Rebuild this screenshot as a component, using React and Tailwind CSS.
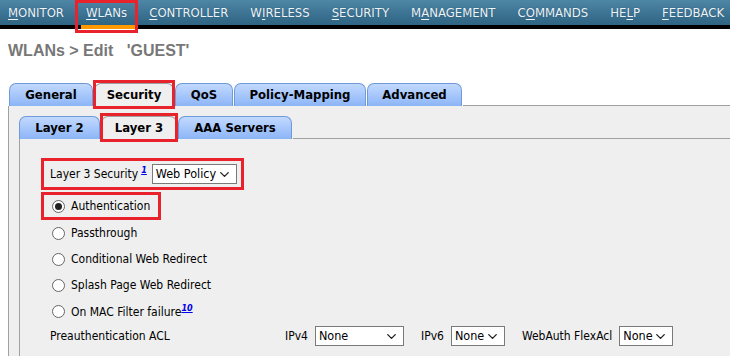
import { ChevronDown } from 'lucide-react'

const nav = [
  ['M', 'ONITOR'],
  ['W', 'LANs'],
  ['C', 'ONTROLLER'],
  ['W', 'I', 'RELESS'],
  ['S', 'ECURITY'],
  ['M', 'A', 'NAGEMENT'],
  ['C', 'O', 'MMANDS'],
  ['HE', 'L', 'P'],
  ['F', 'EEDBACK'],
]

// which chunk of each nav label carries the access-key underline
const underlineIdx = [0, 0, 0, 1, 0, 1, 1, 1, 0]

const font = "font-['DejaVu_Sans_Condensed','DejaVu_Sans',sans-serif]"

function NavItem({ parts, u, active }) {
  return (
    <div className="relative h-full flex items-center px-[11px] whitespace-nowrap">
      <span className="text-[13px] text-[#eef5fa] [text-shadow:0_0_1px_#1d4560]">
        {parts.map((p, i) => (
          <span key={i} className={i === u ? 'underline underline-offset-2' : ''}>{p}</span>
        ))}
      </span>
      {active && (
        <>
          <div className="absolute left-[6px] right-[2px] top-[25px] h-[4px] bg-[#ff9900]" />
          <div className="absolute left-0 right-0 top-0 h-[33px] border-[3px] border-[#e8232b]" />
        </>
      )}
    </div>
  )
}

function Tab({ label, selected, w, boxed }) {
  return (
    <div className="relative">
      <div
        className={`h-[23px] ${w} rounded-t-[7px] border border-b-0 flex items-center justify-center text-[13px] font-bold text-black ${
          selected
            ? 'bg-[#efefef] border-[#a0a0a0]'
            : 'bg-gradient-to-b from-[#c2d9ff] to-[#8cb5f6] border-[#6f9ad8]'
        }`}
      >
        {label}
      </div>
      {boxed && <div className="absolute -left-[1px] -right-[1px] -top-[3px] -bottom-[3px] border-[3px] border-[#e8232b]" />}
    </div>
  )
}

function Select({ value, w }) {
  return (
    <div className={`h-[20px] ${w} bg-white border border-[#7a7a7a] flex items-center justify-between pl-[3px] pr-[4px] text-[12.5px] text-black`}>
      <span>{value}</span>
      <ChevronDown size={15} strokeWidth={2.2} className="text-[#222]" />
    </div>
  )
}

function Radio({ checked }) {
  return (
    <div className="w-[13px] h-[13px] rounded-full border border-[#666] bg-white flex items-center justify-center">
      {checked && <div className="w-[7px] h-[7px] rounded-full bg-[#222]" />}
    </div>
  )
}

function Sup({ n, gap }) {
  return <sup className={`text-[9px] font-bold italic text-[#0000ee] underline -top-[5px] ${gap ? 'ml-[3px]' : ''}`}>{n}</sup>
}

export default function App() {
  return (
    <div className={`w-[730px] h-[356px] bg-white overflow-hidden ${font}`}>
      {/* top nav */}
      <div className="h-[25px] flex bg-gradient-to-b from-[#4e86a5] to-[#2f6483] -ml-[3px]">
        {nav.map((n, i) => (
          <NavItem key={i} parts={n} u={underlineIdx[i]} active={i === 1} />
        ))}
      </div>
      <div className="h-[4px] bg-black" />

      {/* title */}
      <div className="pl-[8px] pt-[10px] h-[54px] font-['Liberation_Sans',sans-serif] font-bold text-[16px] text-[#777] whitespace-pre">
        WLANs &gt; Edit   'GUEST'
      </div>

      {/* level 1 tabs */}
      <div className="pl-[9px] flex gap-[1px] items-end">
        <Tab label="General" w="w-[84px]" />
        <Tab label="Security" w="w-[80px]" selected boxed />
        <Tab label="QoS" w="w-[58px]" />
        <Tab label="Policy-Mapping" w="w-[132px]" />
        <Tab label="Advanced" w="w-[95px]" />
        <div className="flex-1 border-b border-[#a0a0a0]" />
      </div>

      <div className="ml-[8px] border-l border-[#a0a0a0] bg-[#efefef] h-[260px] pt-[10px]">
        {/* level 2 tabs */}
        <div className="pl-[10px] flex gap-[1px] items-end">
          <Tab label="Layer 2" w="w-[81px]" />
          <Tab label="Layer 3" w="w-[76px]" selected boxed />
          <Tab label="AAA Servers" w="w-[114px]" />
          <div className="flex-1 border-b border-[#a0a0a0]" />
        </div>

        <div className="ml-[10px] border-l border-[#a0a0a0] h-[230px] pt-[19px] pl-[21px] text-[12px] text-black">
          <div className="inline-flex items-center h-[32px] border-[3px] border-[#e8232b] pl-[6px] pr-[4px]">
            <span>Layer 3 Security<Sup n="1" gap /></span>
            <div className="ml-[5px]">
              <Select value="Web Policy" w="w-[85px]" />
            </div>
          </div>

          <div>
            <div className="inline-flex items-center h-[28px] border-[3px] border-[#e8232b] pl-[8px] pr-[8px] mt-[2px] gap-[6px]">
              <Radio checked />
              <span>Authentication</span>
            </div>
          </div>

          {['Passthrough', 'Conditional Web Redirect', 'Splash Page Web Redirect'].map(t => (
            <div key={t} className="flex items-center h-[26px] pl-[11px] gap-[6px]">
              <Radio />
              <span>{t}</span>
            </div>
          ))}
          <div className="flex items-center h-[27px] pl-[11px] gap-[6px]">
            <Radio />
            <span>On MAC Filter failure<Sup n="10" /></span>
          </div>

          <div className="flex items-center h-[22px] pl-[9px]">
            <span className="w-[235px]">Preauthentication ACL</span>
            <span className="mr-[7px]">IPv4</span>
            <Select value="None" w="w-[89px]" />
            <span className="ml-[17px] mr-[7px]">IPv6</span>
            <Select value="None" w="w-[54px]" />
            <span className="ml-[17px] mr-[7px]">WebAuth FlexAcl</span>
            <Select value="None" w="w-[54px]" />
          </div>
        </div>
      </div>
    </div>
  )
}
